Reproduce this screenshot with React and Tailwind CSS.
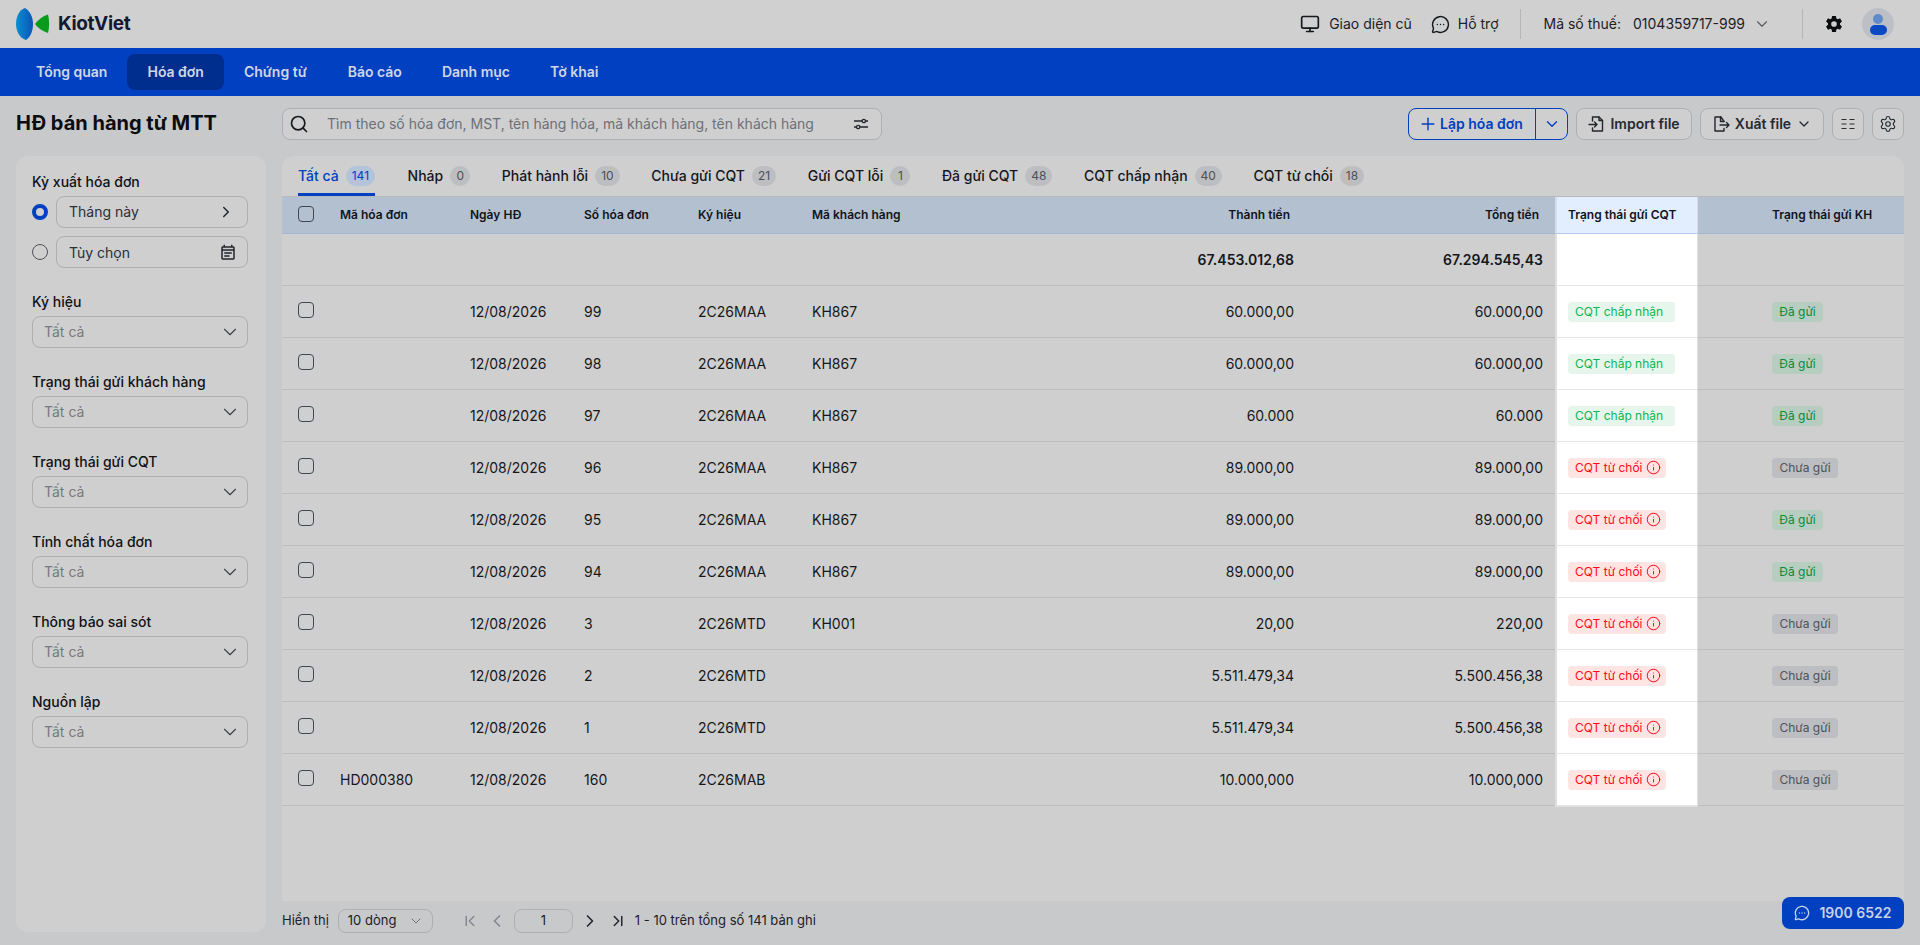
import React from 'react';
import {
  Monitor,
  MessageCircleMore,
  ChevronDown,
  ChevronRight,
  ChevronLeft,
  ChevronFirst,
  ChevronLast,
  Search,
  Plus,
  Settings,
  Info,
} from 'lucide-react';
import { MdOutlineEventNote } from 'react-icons/md';
import { IoSettingsSharp } from 'react-icons/io5';

const navItems = ['Tổng quan', 'Hóa đơn', 'Chứng từ', 'Báo cáo', 'Danh mục', 'Tờ khai'];

const tabs = [
  ['Tất cả', '141'],
  ['Nháp', '0'],
  ['Phát hành lỗi', '10'],
  ['Chưa gửi CQT', '21'],
  ['Gửi CQT lỗi', '1'],
  ['Đã gửi CQT', '48'],
  ['CQT chấp nhận', '40'],
  ['CQT từ chối', '18'],
];

const filters = ['Ký hiệu', 'Trạng thái gửi khách hàng', 'Trạng thái gửi CQT', 'Tính chất hóa đơn', 'Thông báo sai sót', 'Nguồn lập'];

const rows = [
  ['', '99', '2C26MAA', 'KH867', '60.000,00', '60.000,00', true, true],
  ['', '98', '2C26MAA', 'KH867', '60.000,00', '60.000,00', true, true],
  ['', '97', '2C26MAA', 'KH867', '60.000', '60.000', true, true],
  ['', '96', '2C26MAA', 'KH867', '89.000,00', '89.000,00', false, false],
  ['', '95', '2C26MAA', 'KH867', '89.000,00', '89.000,00', false, true],
  ['', '94', '2C26MAA', 'KH867', '89.000,00', '89.000,00', false, true],
  ['', '3', '2C26MTD', 'KH001', '20,00', '220,00', false, false],
  ['', '2', '2C26MTD', '', '5.511.479,34', '5.500.456,38', false, false],
  ['', '1', '2C26MTD', '', '5.511.479,34', '5.500.456,38', false, false],
  ['HD000380', '160', '2C26MAB', '', '10.000,000', '10.000,000', false, false],
];

const gridCols = 'grid grid-cols-[58px_130px_114px_114px_114px_238px_256px_249px_143px_206px]';
const cell = 'flex h-[52px] items-center border-b border-[#bcbdbe]';
const hlCell = 'flex h-[52px] items-center border-l-2 border-r border-x-[#dedede] border-b border-b-[#e6e6e6] bg-white pl-[11px]';
const headCell = 'flex h-[37px] items-center border-b border-[#a3b5d3]';
const btn = 'flex h-8 items-center rounded-lg border border-[#adafb2] bg-[#cfcfcf] text-sm font-semibold text-[#252a33]';

function Logo() {
  return (
    <div className="flex items-center">
      <svg width="34" height="34" viewBox="16 7 34 34">
        <defs>
          <linearGradient id="lens" x1="0" x2="1" y1="0" y2="0">
            <stop offset="0" stopColor="#0a8fd0" />
            <stop offset="1" stopColor="#0a55b5" />
          </linearGradient>
        </defs>
        <path d="M25 8C19 10 16 17 16 24C16 31 19.500 38 26 40C30.500 37 33 31 33 24C33 17 30 11 25 8Z" fill="url(#lens)" />
        <path d="M48 14.500C43 16 38 20 35 24C38 28 43 31.500 48 33C49.500 27 49.500 20.500 48 14.500Z" fill="#0a9a1c" />
      </svg>
      <span className="ml-2 text-[19px] font-bold tracking-[-0.35px] text-[#101a33]">KiotViet</span>
    </div>
  );
}

function TopBar() {
  return (
    <div className="flex h-12 items-center justify-between bg-[#d0d0d0] pl-4 pr-[26px] text-sm text-[#1c2027]">
      <Logo />
      <div className="flex items-center">
        <Monitor className="h-5 w-5 text-[#15181d]" strokeWidth={2} />
        <span className="ml-[9px]">Giao diện cũ</span>
        <MessageCircleMore className="ml-[19px] h-[19px] w-[19px] text-[#15181d]" strokeWidth={1.800} />
        <span className="ml-2">Hỗ trợ</span>
        <div className="ml-[21px] h-[30px] w-px bg-[#b5b6b7]" />
        <span className="ml-[23px]">Mã số thuế:</span>
        <span className="ml-3">0104359717-999</span>
        <ChevronDown className="ml-2 h-[18px] w-[18px] text-[#55595f]" strokeWidth={1.5} />
        <div className="ml-[31px] h-[30px] w-px bg-[#b5b6b7]" />
        <IoSettingsSharp className="ml-[22px] h-[18px] w-[18px] text-[#0c0d0f]" />
        <div className="ml-[19px] flex h-8 w-8 flex-col items-center justify-center rounded-full bg-[#bcc0c6]">
          <div className="h-[10px] w-[10px] rounded-full bg-[#5f8ac9]" />
          <div className="mt-px h-[10px] w-[17px] rounded-full bg-[#0a48c4]" />
        </div>
      </div>
    </div>
  );
}

function NavBar() {
  return (
    <div className="flex h-12 items-center bg-[#0040c1] pl-4 text-sm font-semibold text-[#d0d6e6]">
      {navItems.map((item) => (
        <div key={item} className={`flex h-9 items-center rounded-lg px-5 ${item === 'Hóa đơn' ? 'bg-[#002e8e]' : ''} ${item === 'Báo cáo' ? 'ml-px' : ''}`}>
          {item}
        </div>
      ))}
    </div>
  );
}

function SliderIcon() {
  return (
    <svg width="16" height="16" viewBox="0 0 16 16" fill="none" stroke="#23262c" strokeWidth="1.300">
      <path d="M1 5h8M12.500 5H15M1 11h2.500M7 11h8" />
      <circle cx="10.800" cy="5" r="1.700" />
      <circle cx="5.200" cy="11" r="1.700" />
    </svg>
  );
}

function ColumnsIcon() {
  return (
    <svg width="14" height="14" viewBox="0 0 14 14" fill="none" stroke="#2b2f36" strokeWidth="1.200">
      <path d="M0.500 2.500h5M8.500 2.500h5M0.500 7h5M8.500 7h5M0.500 11.500h5M8.500 11.500h5" />
    </svg>
  );
}

function ImportIcon() {
  return (
    <svg width="18" height="18" viewBox="0 0 18 18" fill="none" stroke="#23262c" strokeWidth="1.400" strokeLinejoin="round" strokeLinecap="round">
      <path d="M4.500 6V2h6.500l3.500 3.500V16H4.500v-3" />
      <path d="M11 2v3.500h3.500" />
      <path d="M1 9.500h8M6.500 7l2.500 2.500L6.500 12" />
    </svg>
  );
}

function ExportIcon() {
  return (
    <svg width="18" height="18" viewBox="0 0 18 18" fill="none" stroke="#23262c" strokeWidth="1.400" strokeLinejoin="round" strokeLinecap="round">
      <path d="M12 6.500L9 2H3v14h9v-2.500" />
      <path d="M8.500 2v4.500H12" />
      <path d="M8 10h9M14.500 7.500L17 10l-2.500 2.500" />
    </svg>
  );
}

function Toolbar() {
  return (
    <div className="flex h-[60px] items-start pt-3">
      <h1 className="w-[282px] pl-4 pt-[1px] text-xl font-bold leading-7 text-[#0b0d10]">HĐ bán hàng từ MTT</h1>
      <div className="flex h-8 w-[600px] items-center rounded-lg border border-[#adafb2] bg-[#cfcfcf] pl-[6px] pr-3">
        <Search className="h-5 w-5 text-[#15181d]" strokeWidth={2} />
        <span className="ml-[18px] flex-1 text-sm text-[#6c7078]">Tìm theo số hóa đơn, MST, tên hàng hóa, mã khách hàng, tên khách hàng</span>
        <SliderIcon />
      </div>
      <div className="ml-auto mr-4 flex items-center gap-2">
        <div className="flex h-8 w-[160px] items-center rounded-lg border border-[#0040c1] bg-[#cfcfcf] text-sm font-semibold text-[#0040c1]">
          <div className="flex h-full flex-1 items-center border-r border-[#0040c1] pl-[9px]">
            <Plus className="h-5 w-5" strokeWidth={1.700} />
            <span className="ml-[2px]">Lập hóa đơn</span>
          </div>
          <div className="flex w-[31px] justify-center">
            <ChevronDown className="h-[18px] w-[18px]" strokeWidth={1.800} />
          </div>
        </div>
        <div className={`${btn} w-[116px] justify-center gap-1`}>
          <ImportIcon />
          Import file
        </div>
        <div className={`${btn} w-[124px] justify-center gap-[5px]`}>
          <ExportIcon />
          Xuất file
          <ChevronDown className="h-4 w-4" strokeWidth={2} />
        </div>
        <div className={`${btn} w-8 justify-center`}>
          <ColumnsIcon />
        </div>
        <div className={`${btn} w-8 justify-center`}>
          <Settings className="h-[18px] w-[18px]" strokeWidth={1.500} />
        </div>
      </div>
    </div>
  );
}

function Label({ children }) {
  return <div className="h-5 text-sm font-medium leading-5 text-[#0f1217]">{children}</div>;
}

function Sidebar() {
  return (
    <div className="mr-4 h-[776px] w-[250px] shrink-0 rounded-xl bg-[#cfcfcf] pl-4 pr-[18px] pt-4">
      <Label>Kỳ xuất hóa đơn</Label>
      <div className="mt-1 flex items-center gap-2">
        <div className="h-4 w-4 rounded-full border-[4px] border-[#0040c1] bg-[#d0d0d0]" />
        <div className="flex h-8 flex-1 items-center justify-between rounded-lg border border-[#adafb2] pl-3 pr-3 text-sm text-[#2a2e35]">
          Tháng này
          <ChevronRight className="h-[18px] w-[18px] text-[#23262c]" strokeWidth={2} />
        </div>
      </div>
      <div className="mt-2 flex items-center gap-2">
        <div className="h-4 w-4 rounded-full border border-[#50545b]" />
        <div className="flex h-8 flex-1 items-center justify-between rounded-lg border border-[#adafb2] pl-3 pr-[10px] pt-px text-sm text-[#2a2e35]">
          Tùy chọn
          <MdOutlineEventNote className="h-[18px] w-[18px] text-[#23262c]" />
        </div>
      </div>
      {filters.map((f) => (
        <div key={f} className="mt-6">
          <Label>{f}</Label>
          <div className="mt-1 flex h-8 items-center justify-between rounded-lg border border-[#adafb2] pl-[11px] pr-[6px] text-sm text-[#777a80]">
            Tất cả
            <ChevronDown className="h-[22px] w-[22px] text-[#3c4047]" strokeWidth={1.200} />
          </div>
        </div>
      ))}
    </div>
  );
}

function Tabs() {
  return (
    <div className="flex h-[41px] gap-[31.6px] border-b border-[#b8b9bb] pl-4">
      {tabs.map(([name, count], i) => (
        <div key={name} className={`flex h-10 items-center gap-[7px] text-sm font-medium ${i === 0 ? 'mr-px border-b-[3px] border-[#0040c1] pt-[3px] text-[#0040c1]' : 'text-[#14171c]'}`}>
          {name}
          <span className={`flex h-5 min-w-5 items-center justify-center rounded-full px-[6px] text-xs font-normal ${i === 0 ? 'bg-[#b3c3d9] text-[#0040c1]' : 'bg-[#bcbec2] text-[#4b4f57]'}`}>
            {count}
          </span>
        </div>
      ))}
    </div>
  );
}

function CqtBadge({ ok }) {
  if (ok) {
    return (
      <span className="flex h-5 w-[107px] items-center rounded bg-[#e6f6ec] pl-[7px] text-xs text-[#0fb356]">CQT chấp nhận</span>
    );
  }
  return (
    <span className="flex h-5 w-[98px] items-center rounded bg-[#ffe4e4] pl-[7px] text-xs text-[#ff0a1a]">
      CQT từ chối
      <Info className="ml-[3px] h-[15px] w-[15px]" strokeWidth={1.600} />
    </span>
  );
}

function KhBadge({ sent }) {
  if (sent) {
    return <span className="flex h-5 w-[51px] items-center justify-center rounded bg-[#b7cdbf] text-xs text-[#0b8a34]">Đã gửi</span>;
  }
  return <span className="flex h-5 w-[66px] items-center justify-center rounded bg-[#bcbec2] text-xs text-[#4d525c]">Chưa gửi</span>;
}

function Checkbox() {
  return <div className="ml-4 -mt-[3px] h-4 w-4 rounded border border-[#3f4650]" />;
}

function Table() {
  return (
    <div className="text-sm text-[#14171c]">
      <div className={`${gridCols} text-xs font-semibold text-[#10141b]`}>
        <div className={`${headCell} bg-[#b3c0d0]`}><Checkbox /></div>
        <div className={`${headCell} bg-[#b3c0d0]`}>Mã hóa đơn</div>
        <div className={`${headCell} bg-[#b3c0d0]`}>Ngày HĐ</div>
        <div className={`${headCell} bg-[#b3c0d0]`}>Số hóa đơn</div>
        <div className={`${headCell} bg-[#b3c0d0]`}>Ký hiệu</div>
        <div className={`${headCell} bg-[#b3c0d0]`}>Mã khách hàng</div>
        <div className={`${headCell} justify-end bg-[#b3c0d0] pr-4`}>Thành tiền</div>
        <div className={`${headCell} justify-end bg-[#b3c0d0] pr-4`}>Tổng tiền</div>
        <div className="flex h-[37px] items-center border-l-2 border-r border-x-[#d5dde8] border-b border-b-[#b5c9ee] bg-[#e2edfd] pl-[11px]">Trạng thái gửi CQT</div>
        <div className={`${headCell} bg-[#b3c0d0] pl-[74px]`}>Trạng thái gửi KH</div>
      </div>
      <div className={`${gridCols} font-semibold`}>
        <div className={cell} />
        <div className={cell} />
        <div className={cell} />
        <div className={cell} />
        <div className={cell} />
        <div className={cell} />
        <div className={`${cell} justify-end pr-3`}>67.453.012,68</div>
        <div className={`${cell} justify-end pr-3`}>67.294.545,43</div>
        <div className={hlCell} />
        <div className={cell} />
      </div>
      {rows.map((r, i) => (
        <div key={i} className={gridCols}>
          <div className={cell}><Checkbox /></div>
          <div className={cell}>{r[0]}</div>
          <div className={cell}>12/08/2026</div>
          <div className={cell}>{r[1]}</div>
          <div className={cell}>{r[2]}</div>
          <div className={cell}>{r[3]}</div>
          <div className={`${cell} justify-end pr-3`}>{r[4]}</div>
          <div className={`${cell} justify-end pr-3`}>{r[5]}</div>
          <div className={`${hlCell} ${i === rows.length - 1 ? 'shadow-[0_1px_0_#dedede]' : ''}`}><CqtBadge ok={r[6]} /></div>
          <div className={`${cell} pl-[74px]`}><KhBadge sent={r[7]} /></div>
        </div>
      ))}
    </div>
  );
}

function Pagination() {
  return (
    <div className="mt-2 flex h-6 items-center text-[13px] text-[#1c2027]">
      Hiển thị
      <div className="ml-[9px] flex h-6 w-[95px] items-center justify-between rounded-lg border border-[#adafb2] pl-[9px] pr-2">
        10 dòng
        <ChevronDown className="h-4 w-4 text-[#6e7278]" strokeWidth={1.500} />
      </div>
      <ChevronFirst className="ml-[28px] h-[18px] w-[18px] text-[#85888e]" strokeWidth={2} />
      <ChevronLeft className="ml-2 h-5 w-5 text-[#85888e]" strokeWidth={2} />
      <div className="ml-[7px] flex h-6 w-[59px] items-center justify-center rounded-lg border border-[#adafb2]">1</div>
      <ChevronRight className="ml-[7px] h-5 w-5 text-[#23262c]" strokeWidth={2} />
      <ChevronLast className="ml-[9px] h-[18px] w-[18px] text-[#23262c]" strokeWidth={2} />
      <span className="ml-2">1 - 10 trên tổng số 141 bản ghi</span>
    </div>
  );
}

export default function App() {
  return (
    <div className="relative h-screen overflow-hidden bg-[#c8c9cb] font-['Inter',sans-serif]">
      <TopBar />
      <NavBar />
      <Toolbar />
      <div className="flex pl-4 pr-4">
        <Sidebar />
        <div className="min-w-0 flex-1">
          <div className="h-[745px] overflow-hidden rounded-t-xl bg-[#cfcfcf]">
            <Tabs />
            <Table />
          </div>
          <Pagination />
        </div>
      </div>
      <div className="absolute bottom-4 right-4 flex h-8 w-[122px] items-center justify-center gap-[9px] rounded-lg bg-[#0040c1] text-sm font-semibold text-[#c9d2e6]">
        <MessageCircleMore className="h-4 w-4" strokeWidth={2} />
        1900 6522
      </div>
    </div>
  );
}
